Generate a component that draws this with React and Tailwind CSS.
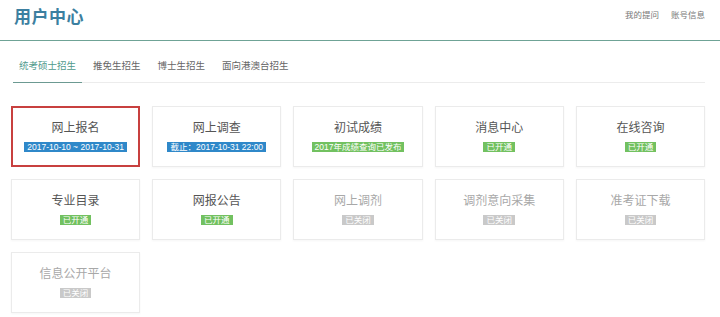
import React from 'react';

const tabs = ['统考硕士招生', '推免生招生', '博士生招生', '面向港澳台招生'];

const items = [
  { title: '网上报名', badge: '2017-10-10 ~ 2017-10-31', tone: 'blue', selected: true },
  { title: '网上调查', badge: '截止：2017-10-31 22:00', tone: 'blue' },
  { title: '初试成绩', badge: '2017年成绩查询已发布', tone: 'green' },
  { title: '消息中心', badge: '已开通', tone: 'green' },
  { title: '在线咨询', badge: '已开通', tone: 'green' },
  { title: '专业目录', badge: '已开通', tone: 'green' },
  { title: '网报公告', badge: '已开通', tone: 'green' },
  { title: '网上调剂', badge: '已关闭', tone: 'gray' },
  { title: '调剂意向采集', badge: '已关闭', tone: 'gray' },
  { title: '准考证下载', badge: '已关闭', tone: 'gray' },
  { title: '信息公开平台', badge: '已关闭', tone: 'gray' },
];

const badgeTone = {
  blue: 'bg-[#2f88c9]',
  green: 'bg-[#72c160]',
  gray: 'bg-[#c9c9c9]',
};

function Card({ item }) {
  const off = item.tone === 'gray';
  return (
    <div
      className={`h-[61px] flex flex-col items-center justify-center gap-[7px] bg-white ${
        item.selected
          ? 'border-2 border-[#c8403f]'
          : 'border border-[#ebebeb] shadow-[0_1px_2px_rgba(0,0,0,0.04)]'
      }`}
    >
      <div className={`text-[12px] leading-[14px] ${off ? 'text-[#a8a8a8]' : 'text-[#555]'}`}>
        {item.title}
      </div>
      <div
        className={`text-[8.5px] leading-[10px] px-[3px] text-white whitespace-nowrap ${badgeTone[item.tone]}`}
      >
        {item.badge}
      </div>
    </div>
  );
}

export default function App() {
  return (
    <div
      className="w-[720px] h-[317px] bg-white overflow-hidden"
      style={{ fontFamily: '"Liberation Sans", "Noto Sans CJK SC", sans-serif' }}
    >
      {/* Header */}
      <div className="h-[41px] flex items-center justify-between pl-[14px] pr-[15px] border-b-[1.5px] border-[#6fa396]">
        <h1 className="text-[17px] font-bold text-[#3c7fa0] tracking-[0.5px] -mt-[4px]">用户中心</h1>
        <div className="flex gap-[12px] text-[8.5px] text-[#777] -mt-[10px]">
          <span>我的提问</span>
          <span>账号信息</span>
        </div>
      </div>

      {/* Tabs */}
      <div className="mx-[13px] mt-[13px] w-[692px] flex border-b border-[#ececec] text-[9.5px]">
        {tabs.map((t, i) => (
          <div
            key={t}
            className={`px-[6px] pt-[5px] pb-[9px] mr-[5px] ${
              i === 0 ? 'text-[#4f9a8c] border-b-[1.5px] border-[#6c9a92] -mb-px' : 'text-[#666]'
            }`}
          >
            {t}
          </div>
        ))}
      </div>

      {/* Grid */}
      <div className="ml-[11px] mt-[23px] w-[694px] grid grid-cols-5 gap-x-[12px] gap-y-[12px]">
        {items.map(item => (
          <Card key={item.title} item={item} />
        ))}
      </div>
    </div>
  );
}
